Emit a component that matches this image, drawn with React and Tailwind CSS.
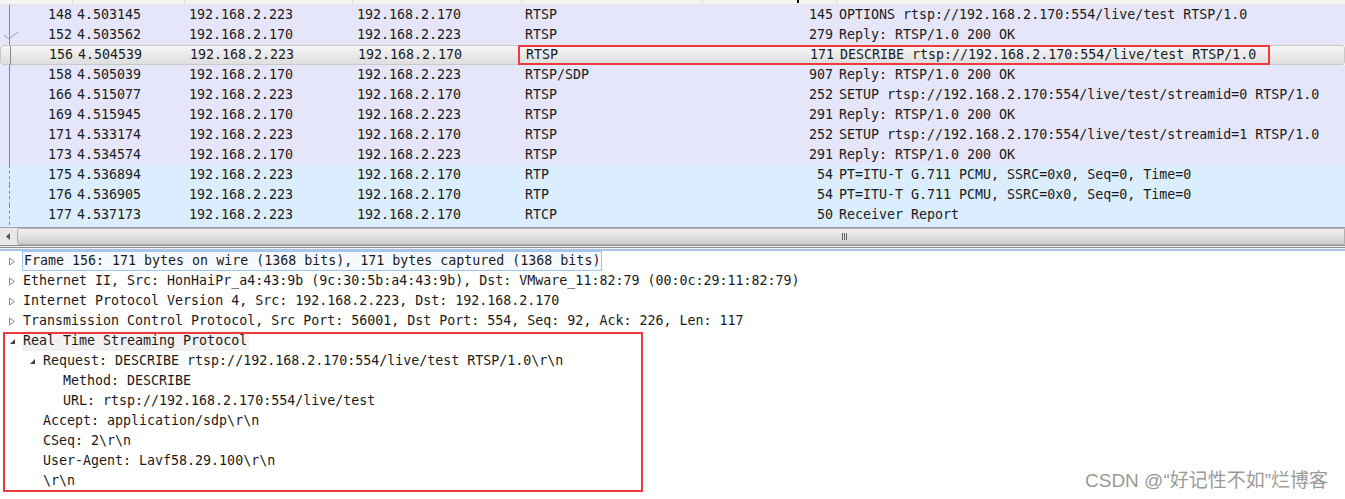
import React from 'react'

const packets = [
  { no: 148, time: '4.503145', src: '192.168.2.223', dst: '192.168.2.170', proto: 'RTSP', len: 145, info: 'OPTIONS rtsp://192.168.2.170:554/live/test RTSP/1.0', kind: 'rtsp' },
  { no: 152, time: '4.503562', src: '192.168.2.170', dst: '192.168.2.223', proto: 'RTSP', len: 279, info: 'Reply: RTSP/1.0 200 OK', kind: 'rtsp', tick: true },
  { no: 156, time: '4.504539', src: '192.168.2.223', dst: '192.168.2.170', proto: 'RTSP', len: 171, info: 'DESCRIBE rtsp://192.168.2.170:554/live/test RTSP/1.0', kind: 'sel' },
  { no: 158, time: '4.505039', src: '192.168.2.170', dst: '192.168.2.223', proto: 'RTSP/SDP', len: 907, info: 'Reply: RTSP/1.0 200 OK', kind: 'rtsp' },
  { no: 166, time: '4.515077', src: '192.168.2.223', dst: '192.168.2.170', proto: 'RTSP', len: 252, info: 'SETUP rtsp://192.168.2.170:554/live/test/streamid=0 RTSP/1.0', kind: 'rtsp' },
  { no: 169, time: '4.515945', src: '192.168.2.170', dst: '192.168.2.223', proto: 'RTSP', len: 291, info: 'Reply: RTSP/1.0 200 OK', kind: 'rtsp' },
  { no: 171, time: '4.533174', src: '192.168.2.223', dst: '192.168.2.170', proto: 'RTSP', len: 252, info: 'SETUP rtsp://192.168.2.170:554/live/test/streamid=1 RTSP/1.0', kind: 'rtsp' },
  { no: 173, time: '4.534574', src: '192.168.2.170', dst: '192.168.2.223', proto: 'RTSP', len: 291, info: 'Reply: RTSP/1.0 200 OK', kind: 'rtsp' },
  { no: 175, time: '4.536894', src: '192.168.2.223', dst: '192.168.2.170', proto: 'RTP', len: 54, info: 'PT=ITU-T G.711 PCMU, SSRC=0x0, Seq=0, Time=0', kind: 'rtp' },
  { no: 176, time: '4.536905', src: '192.168.2.223', dst: '192.168.2.170', proto: 'RTP', len: 54, info: 'PT=ITU-T G.711 PCMU, SSRC=0x0, Seq=0, Time=0', kind: 'rtp' },
  { no: 177, time: '4.537173', src: '192.168.2.223', dst: '192.168.2.170', proto: 'RTCP', len: 50, info: 'Receiver Report', kind: 'rtp' },
]

const details = [
  { level: 0, arrow: 'closed', text: 'Frame 156: 171 bytes on wire (1368 bits), 171 bytes captured (1368 bits)', focus: true },
  { level: 0, arrow: 'closed', text: 'Ethernet II, Src: HonHaiPr_a4:43:9b (9c:30:5b:a4:43:9b), Dst: VMware_11:82:79 (00:0c:29:11:82:79)' },
  { level: 0, arrow: 'closed', text: 'Internet Protocol Version 4, Src: 192.168.2.223, Dst: 192.168.2.170' },
  { level: 0, arrow: 'closed', text: 'Transmission Control Protocol, Src Port: 56001, Dst Port: 554, Seq: 92, Ack: 226, Len: 117' },
  { level: 0, arrow: 'open', text: 'Real Time Streaming Protocol', shade: true },
  { level: 1, arrow: 'open', text: 'Request: DESCRIBE rtsp://192.168.2.170:554/live/test RTSP/1.0\\r\\n' },
  { level: 2, text: 'Method: DESCRIBE' },
  { level: 2, text: 'URL: rtsp://192.168.2.170:554/live/test' },
  { level: 1, text: 'Accept: application/sdp\\r\\n' },
  { level: 1, text: 'CSeq: 2\\r\\n' },
  { level: 1, text: 'User-Agent: Lavf58.29.100\\r\\n' },
  { level: 1, text: '\\r\\n' },
]

const mono = { fontFamily: '"DejaVu Sans Mono", "Liberation Mono", monospace' }

const Arrow = ({ type }) => {
  if (type === 'closed') {
    return (
      <svg width="8" height="9" viewBox="0 0 8 9" className="shrink-0">
        <path d="M1.5 1 L6.5 4.5 L1.5 8 Z" fill="white" stroke="#8a8a8a" strokeWidth="1" />
      </svg>
    )
  }
  return (
    <svg width="8" height="9" viewBox="0 0 8 9" className="shrink-0">
      <path d="M7 2 L7 7 L2 7 Z" fill="#404040" />
    </svg>
  )
}

const PacketRow = ({ p }) => {
  const bg =
    p.kind === 'sel'
      ? 'bg-gradient-to-b from-[#f6f6f6] to-[#dedede] border border-[#c9c9c9] rounded-[3px]'
      : p.kind === 'rtp'
      ? 'bg-[#daeeff]'
      : 'bg-[#e6e6fa]'
  return (
    <div className={`relative flex items-center h-[20px] text-[13.3px] text-[#1a1a1a] whitespace-pre ${bg}`}>
      {/* related-packet line */}
      <div
        className={`absolute left-[9px] top-0 h-[20px] border-l ${
          p.kind === 'rtp' ? 'border-dashed border-[#8a8a8a]' : 'border-[#8a8a8a]'
        }`}
      />
      {p.tick && (
        <svg className="absolute left-[3px] top-[6px]" width="16" height="10" viewBox="0 0 16 10">
          <path d="M1 4 L6 8 L15 1" fill="none" stroke="#9a9a9a" strokeWidth="1" />
        </svg>
      )}
      <span className="w-[72px] text-right">{p.no}</span>
      <span className="w-[112px] pl-[5px]">{p.time}</span>
      <span className="w-[173px] pl-[5px]">{p.src}</span>
      <span className="w-[168px]">{p.dst}</span>
      <span className="w-[240px]">{p.proto}</span>
      <span className="w-[68px] text-right">{p.len}</span>
      <span className="pl-[6px]">{p.info}</span>
    </div>
  )
}

const DetailRow = ({ d }) => {
  const pad = d.level === 0 ? 'pl-[6px]' : d.level === 1 ? 'pl-[26px]' : 'pl-[63px]'
  return (
    <div className={`flex items-center h-[20px] text-[13.3px] text-[#1a1a1a] whitespace-pre ${pad}`}>
      {d.level < 2 && (
        <span className="w-[17px] flex items-center pl-[2px]">
          {d.arrow && <Arrow type={d.arrow} />}
        </span>
      )}
      <span
        className={`h-[20px] flex items-center ${
          d.focus ? 'border border-[#9cc6f0] bg-[#f6faff] px-[1px] -ml-[1px]' : ''
        } ${d.shade ? 'bg-[#f1f1f1] pr-[2px]' : ''}`}
      >
        {d.text}
      </span>
    </div>
  )
}

export default function App() {
  return (
    <div className="w-[1345px] h-[499px] overflow-hidden bg-white relative" style={mono}>
      {/* column header remnant */}
      <div className="flex h-[5px] bg-[#f4f4f4] border-b border-[#e2e2e2]">
        <div className="w-[73px] border-r border-[#dcdcdc]" />
        <div className="w-[112px] border-r border-[#dcdcdc]" />
        <div className="w-[168px] border-r border-[#dcdcdc]" />
        <div className="w-[169px] border-r border-[#dcdcdc]" />
        <div className="w-[181px] border-r border-[#dcdcdc] relative">
          <div className="absolute right-[-97px] top-0 w-[2px] h-[3px] bg-black" />
        </div>
        <div className="w-[134px] border-r border-[#dcdcdc]" />
        <div className="flex-1" />
      </div>

      {/* packet list */}
      <div>
        {packets.map((p) => (
          <PacketRow key={p.no} p={p} />
        ))}
      </div>

      {/* horizontal scrollbar */}
      <div className="h-[2px] bg-[#daeeff]" />
      <div className="flex items-stretch h-[18px] bg-[#e8e8e8] border-t border-[#a0a0a0]">
        <div className="w-[17px] flex items-center justify-center">
          <svg width="5" height="7" viewBox="0 0 5 7">
            <path d="M4 0 L0 3.5 L4 7 Z" fill="#555" />
          </svg>
        </div>
        <div className="flex-1 flex items-center justify-center rounded-l-[3px] border border-[#b0b0b0] bg-gradient-to-b from-[#f2f2f2] via-[#e2e2e2] to-[#cbcbcb]">
          <div className="flex gap-[1px] ml-[326px]">
            <div className="w-[1px] h-[7px] bg-[#666]" />
            <div className="w-[1px] h-[7px] bg-[#666]" />
            <div className="w-[1px] h-[7px] bg-[#666]" />
          </div>
        </div>
      </div>
      <div className="h-[3px] bg-[#ececec] border-t border-[#8f8f8f] border-b" />
      <div className="h-[3px] bg-[#f0f0f0] border-b-[2px] border-[#a8c4e6]" />

      {/* packet details */}
      <div className="bg-white">
        {details.map((d, i) => (
          <DetailRow key={i} d={d} />
        ))}
      </div>

      {/* highlight boxes */}
      <div className="absolute left-[518px] top-[45px] w-[752px] h-[20px] border-2 border-[#ee3a3f]" />
      <div className="absolute left-[3px] top-[332px] w-[640px] h-[160px] border-2 border-[#ee3a3f]" />

      {/* watermark */}
      <div
        className="absolute left-[1085px] top-[467px] text-[19px] text-[#9a9a9a] whitespace-nowrap"
        style={{ fontFamily: '"Liberation Sans", "Noto Sans CJK SC", sans-serif' }}
      >
        CSDN @“好记性不如”烂博客
      </div>
    </div>
  )
}
